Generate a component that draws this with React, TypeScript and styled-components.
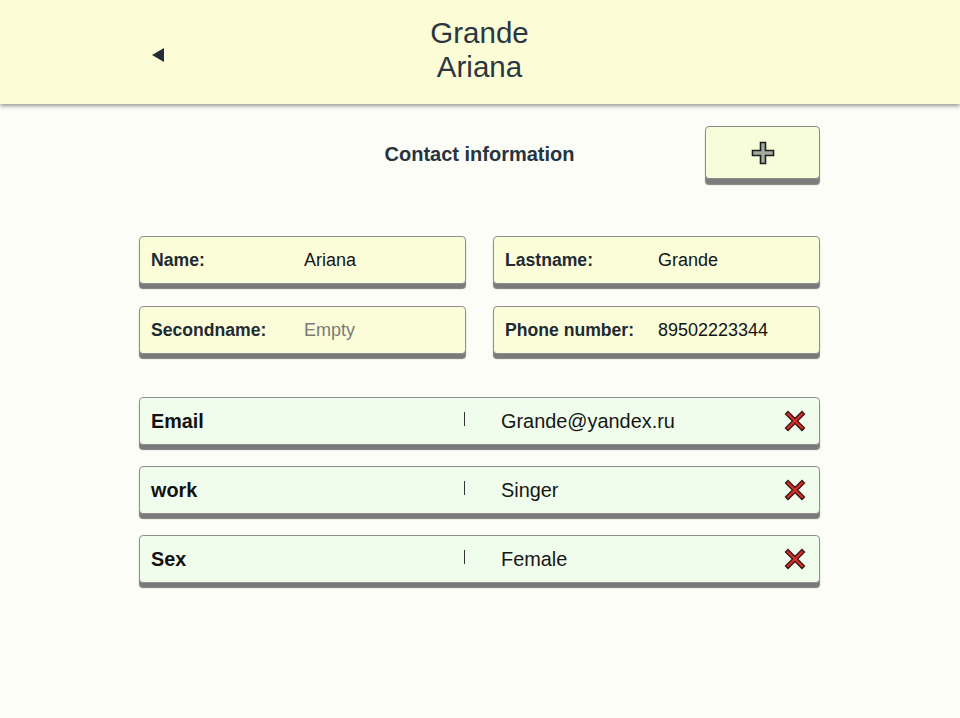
import React from "react";
import styled, { createGlobalStyle } from "styled-components";

const Global = createGlobalStyle`
  html, body { margin: 0; padding: 0; }
  body {
    background: #fdfdf8;
    font-family: "Liberation Sans", Arial, sans-serif;
    color: #1b2630;
  }
`;

const Header = styled.header`
  height: 104px;
  box-sizing: border-box;
  padding-top: 16px;
  background: #fcfdd6;
  box-shadow: 0 2px 4px rgba(60, 70, 70, 0.55);
`;

const HeaderInner = styled.div`
  width: 682px;
  box-sizing: border-box;
  padding-right: 1px;
  margin: 0 auto;
  display: grid;
  grid-template-columns: 1fr auto 1fr;
  align-items: center;
`;

const BackButton = styled.button`
  justify-self: start;
  margin: 10px 0 0 13px;
  padding: 0;
  border: none;
  background: none;
  width: 0;
  height: 0;
  border-top: 7px solid transparent;
  border-bottom: 7px solid transparent;
  border-right: 12px solid #232d38;
  cursor: pointer;
`;

const Title = styled.h1`
  margin: 0;
  font-weight: 400;
  font-size: 29.5px;
  line-height: 34px;
  text-align: center;
  color: #2a3642;
`;

const Main = styled.main`
  width: 682px;
  box-sizing: border-box;
  padding: 0 1px 40px 0;
  margin: 22px auto 0;
`;

const SectionHead = styled.div`
  display: grid;
  grid-template-columns: 1fr auto 1fr;
  align-items: start;
`;

const SectionTitle = styled.h2`
  grid-column: 2;
  margin: 17px 0 0;
  font-size: 20px;
  font-weight: 700;
  color: #26343f;
`;

const AddButton = styled.button`
  grid-column: 3;
  justify-self: end;
  width: 115px;
  height: 53px;
  display: flex;
  align-items: center;
  justify-content: center;
  background: #f8fdd9;
  border: 1px solid #8b8b8b;
  border-radius: 4px;
  box-shadow: 0 6px 1px #7d7d7d;
  cursor: pointer;
`;

const FieldGrid = styled.div`
  margin-top: 57px;
  display: grid;
  grid-template-columns: 1fr 1fr;
  column-gap: 27px;
  row-gap: 22px;
`;

const Card = styled.div<{ $tint: string }>`
  box-sizing: border-box;
  height: 48px;
  display: flex;
  align-items: center;
  background: ${(p) => p.$tint};
  border: 1px solid #8f8f8f;
  border-radius: 4px;
  box-shadow: 0 5px 1px #7a7a7a;
`;

const FieldCard = styled(Card)`
  padding-left: 11px;
`;

const FieldLabel = styled.span`
  width: 153px;
  flex: none;
  font-size: 17.6px;
  font-weight: 700;
  color: #1f2a33;
`;

const FieldValue = styled.span<{ $empty?: boolean }>`
  font-size: 18px;
  color: ${(p) => (p.$empty ? "#7a7a7a" : "#141414")};
`;

const RowList = styled.div`
  margin-top: 43px;
  display: flex;
  flex-direction: column;
  gap: 21px;
`;

const RowCard = styled(Card)`
  padding: 0 13px 0 11px;
`;

const RowLabel = styled.span`
  width: 313px;
  flex: none;
  font-size: 19.8px;
  font-weight: 700;
  color: #111;
`;

const Separator = styled.span`
  flex: none;
  width: 1px;
  height: 14px;
  margin-top: -4px;
  background: #333;
`;

const RowValue = styled.span`
  flex: 1;
  margin-left: 36px;
  font-size: 19.9px;
  color: #161616;
`;

const DeleteButton = styled.button`
  flex: none;
  padding: 0;
  border: none;
  background: none;
  display: flex;
  cursor: pointer;
`;

const PlusIcon = () => (
  <svg width="24" height="24" viewBox="0 0 24 24">
    <path
      d="M9.5 1.5h5v8h8v5h-8v8h-5v-8h-8v-5h8z"
      fill="#a3ab9e"
      stroke="#1c1f22"
      strokeWidth="1.6"
      strokeLinejoin="miter"
    />
  </svg>
);

const CrossIcon = () => (
  <svg width="22" height="22" viewBox="0 0 22 22">
    <path
      d="M4 1.5L11 8.5L18 1.5L20.5 4L13.5 11L20.5 18L18 20.5L11 13.5L4 20.5L1.5 18L8.5 11L1.5 4Z"
      fill="#d8302a"
      stroke="#3a1414"
      strokeWidth="1.3"
      strokeLinejoin="miter"
    />
  </svg>
);

const fields = [
  { label: "Name:", value: "Ariana" },
  { label: "Lastname:", value: "Grande" },
  { label: "Secondname:", value: "Empty", empty: true },
  { label: "Phone number:", value: "89502223344" },
];

const rows = [
  { label: "Email", value: "Grande@yandex.ru" },
  { label: "work", value: "Singer" },
  { label: "Sex", value: "Female" },
];

export default function App() {
  return (
    <>
      <Global />
      <Header>
        <HeaderInner>
          <BackButton aria-label="Back" />
          <Title>
            Grande
            <br />
            Ariana
          </Title>
        </HeaderInner>
      </Header>
      <Main>
        <SectionHead>
          <SectionTitle>Contact information</SectionTitle>
          <AddButton aria-label="Add">
            <PlusIcon />
          </AddButton>
        </SectionHead>
        <FieldGrid>
          {fields.map((f) => (
            <FieldCard key={f.label} $tint="#fafdd8">
              <FieldLabel>{f.label}</FieldLabel>
              <FieldValue $empty={f.empty}>{f.value}</FieldValue>
            </FieldCard>
          ))}
        </FieldGrid>
        <RowList>
          {rows.map((r) => (
            <RowCard key={r.label} $tint="#f1fdec">
              <RowLabel>{r.label}</RowLabel>
              <Separator />
              <RowValue>{r.value}</RowValue>
              <DeleteButton aria-label="Delete">
                <CrossIcon />
              </DeleteButton>
            </RowCard>
          ))}
        </RowList>
      </Main>
    </>
  );
}
